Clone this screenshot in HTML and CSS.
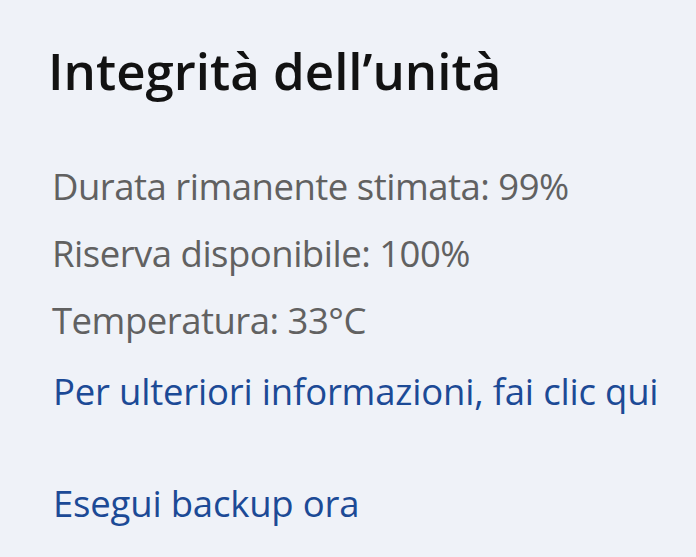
FILE: index.html
```html
<!DOCTYPE html>
<html lang="it">
<head>
<meta charset="utf-8">
<link rel="stylesheet" href="styles.css">
</head>
<body>
<main class="panel">
  <h1 class="title">Integrità dell’unità</h1>
  <ul class="stats">
    <li>Durata rimanente stimata: 99%</li>
    <li>Riserva disponibile: 100%</li>
    <li>Temperatura: 33°C</li>
  </ul>
  <a class="link more" href="#">Per ulteriori informazioni, fai clic qui</a>
  <a class="link backup" href="#">Esegui backup ora</a>
</main>
</body>
</html>
```
FILE: styles.css
```css
html, body {
  margin: 0;
  padding: 0;
  background: #eff2f8;
}
body {
  font-family: "Open Sans", "Noto Sans", sans-serif;
  width: 696px;
  height: 557px;
  overflow: hidden;
}
.panel {
  display: flex;
  flex-direction: column;
  align-items: flex-start;
  padding: 36px 0 0 48px;
}
.title {
  margin: 0;
  font-size: 51px;
  font-weight: 600;
  line-height: 68px;
  color: #121212;
}
.stats {
  list-style: none;
  margin: 49px 0 0 0;
  padding: 0 0 0 4px;
  color: #616161;
  font-size: 36.5px;
  letter-spacing: -0.5px;
  line-height: 67px;
}
.link {
  color: #1c4a96;
  text-decoration: none;
  font-size: 36.5px;
  letter-spacing: -0.2px;
  line-height: 67px;
  padding-left: 5px;
}
.more {
  margin-top: 4px;
}
.backup {
  margin-top: 45px;
}
```
